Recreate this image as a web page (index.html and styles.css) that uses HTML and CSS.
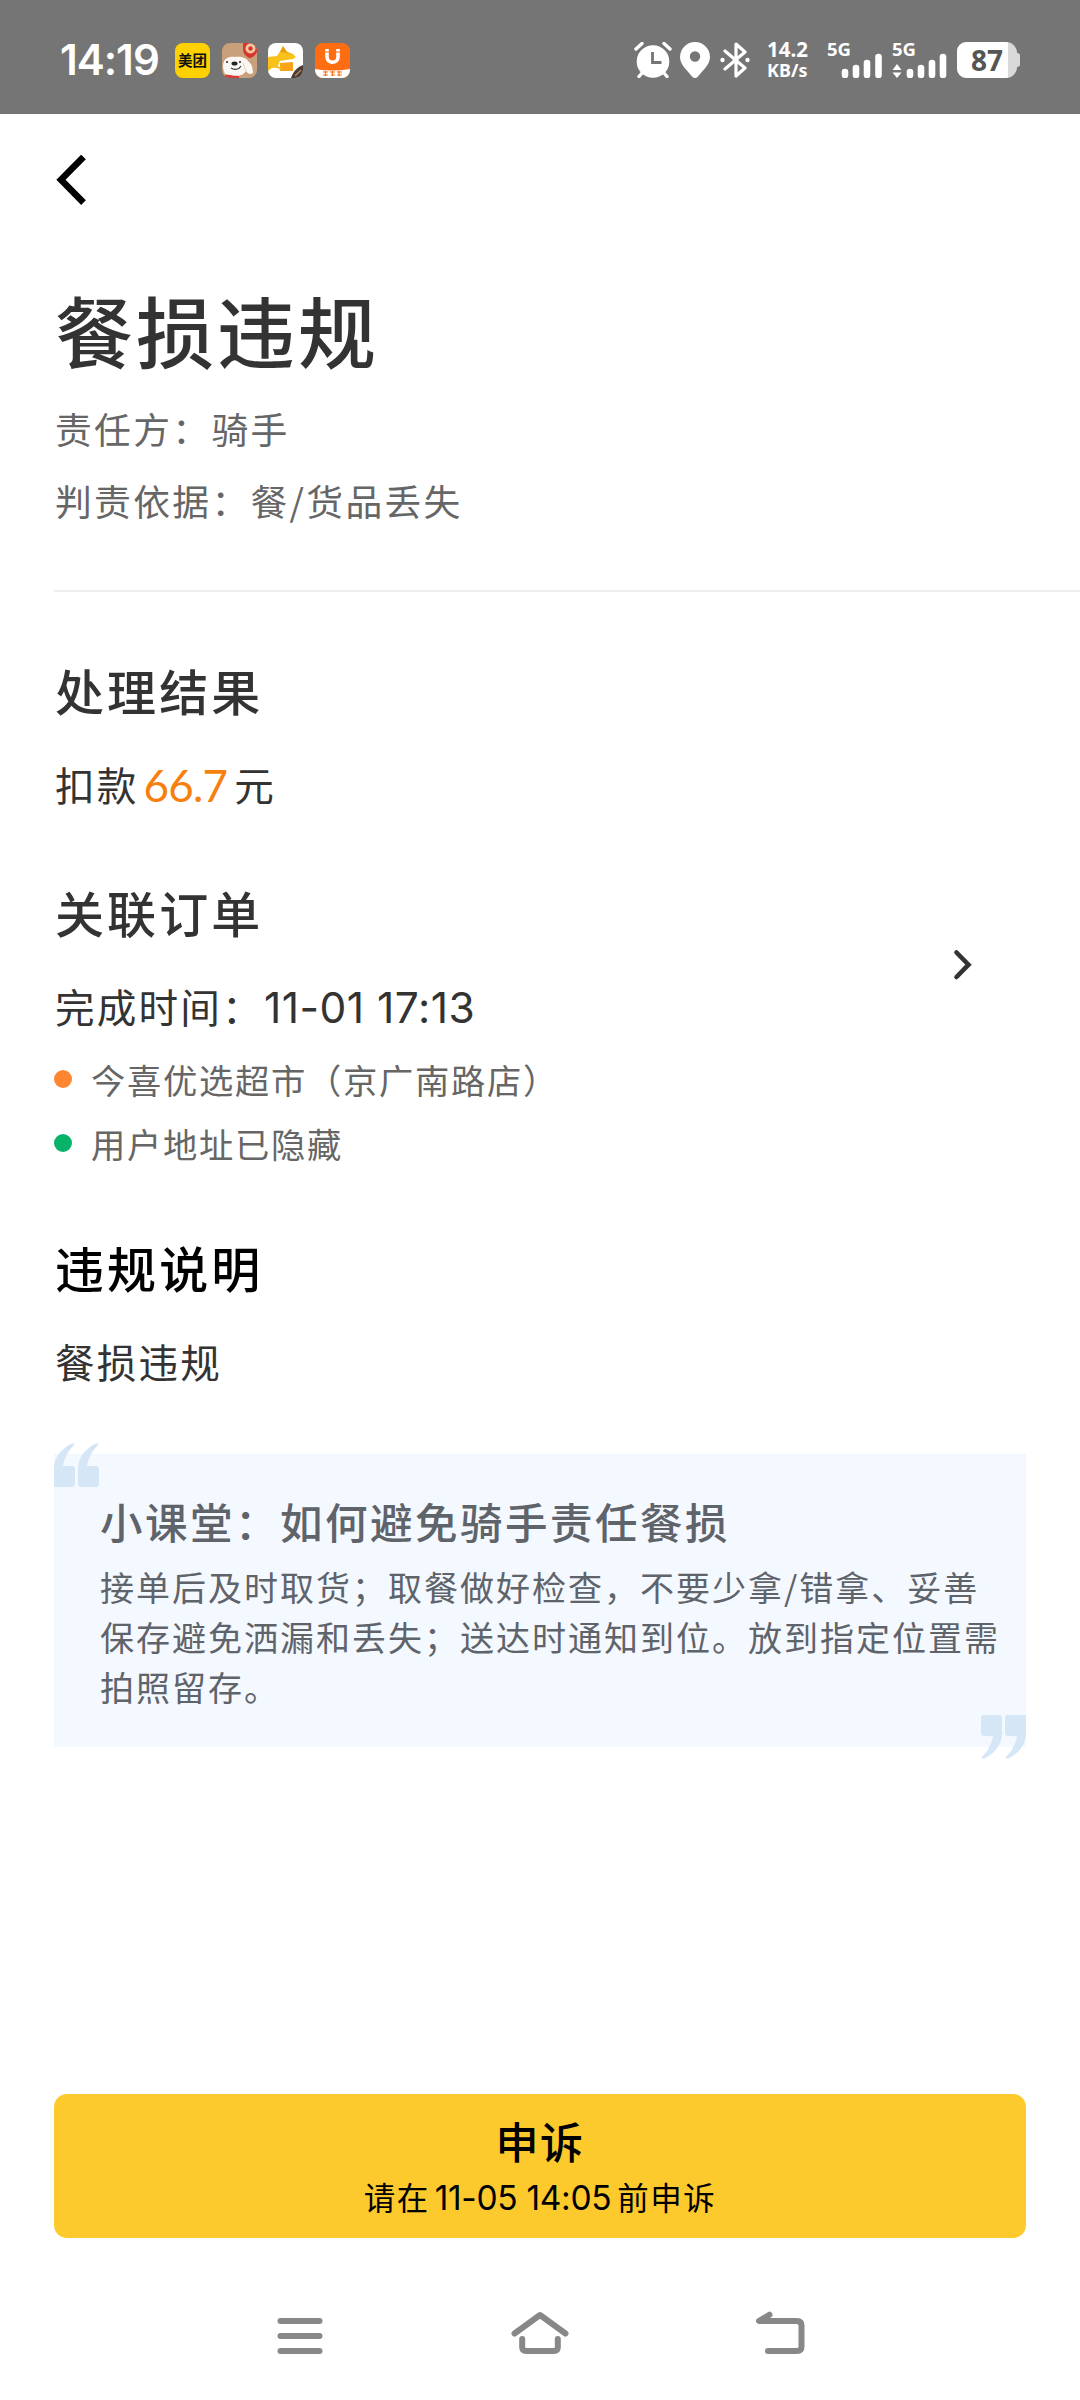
FILE: index.html
```html
<!DOCTYPE html>
<html lang="zh-CN">
<head>
<meta charset="utf-8">
<title>餐损违规</title>
<link rel="stylesheet" href="styles.css">
</head>
<body>
<div class="screen">
  <div class="status">
    <span class="clock">14:19</span>
    <div class="apps">
      <span class="app app-mt">美团</span>
      <svg class="app" viewBox="0 0 35 35">
        <rect width="35" height="35" fill="#c9a07c"/>
        <path d="M21 0h14v9q-3 6-8 6-6-3-6-9z" fill="#d8352f"/>
        <circle cx="28.500" cy="5.500" r="5" fill="#f0c9a0"/><circle cx="28.500" cy="5.500" r="2.200" fill="#d8352f"/>
        <path d="M3 31C-2 20 3 12 13 14c8-1 12 2 14 5 3 2 4 7 4 11-3 2-5 1-7-2-3 5-10 7-21 3z" fill="#fbf7f4"/>
        <path d="M21 20c1 3 2 6 3 8" fill="none" stroke="#d9cdc4"/>
        <ellipse cx="12.500" cy="20.500" rx="3" ry="2" fill="#222"/>
        <circle cx="5" cy="19" r="1" fill="#222"/><circle cx="18" cy="19" r="1" fill="#222"/>
        <path d="M9 25c3 2 8 2 10-2" fill="none" stroke="#333" stroke-width="1.100"/>
        <path d="M3 32c4-1 7 1 14 1v2H3z" fill="#d83a35"/>
      </svg>
      <svg class="app" viewBox="0 0 35 35">
        <rect width="35" height="35" fill="#fff"/>
        <path d="M0 14l9-1 4-6 2-4 4 6 6 2 3 3-3 2-7 1-6 1-3 7-4-1-5 4z" fill="#f8c21a"/>
        <path d="M12 9l3-6 4 6 6 2" fill="#e6a010"/>
        <path d="M12 20l13-1v9H12z" fill="#f9a31b"/>
        <path d="M0 26c4-3 9-3 13 0" stroke="#f8bd18" fill="none" stroke-width="2"/>
        <path d="M35 22v13H23c2-6 6-11 12-13z" fill="#4b3a30"/>
        <path d="M27 33l6-6" stroke="#a58b72" stroke-width="1.500"/>
      </svg>
      <svg class="app" viewBox="0 0 35 35">
        <rect width="35" height="35" fill="#ff6d12"/>
        <path d="M12 6v8c0 7 11 7 11 0V6" fill="none" stroke="#fff" stroke-width="3.600"/>
        <path d="M9 9h5M21 9h5" stroke="#ff6d12" stroke-width="1"/>
        <path d="M0 26q17 3 35 0v9H0z" fill="#fff"/>
        <path d="M8 29h5M8 32h5M10.500 28v5M15 29h5M16 32h4M17.500 28v5M22 29h5M22 32h5M24 28v5" stroke="#ff6d12" stroke-width="1.200"/>
      </svg>
    </div>
    <div class="tray">
      <svg class="alarm" viewBox="0 0 38 36" width="38" height="36">
        <circle cx="19" cy="19.500" r="16.300" fill="#fff"/>
        <path d="M2 7l6-5.500M36 7l-6-5.500" stroke="#fff" stroke-width="3.400" stroke-linecap="round"/>
        <path d="M8 31l-3 3.500M30 31l3 3.500" stroke="#fff" stroke-width="3.400" stroke-linecap="round"/>
        <path d="M18.500 10v10.500h9" fill="none" stroke="#757575" stroke-width="2.800"/>
      </svg>
      <svg class="pin" viewBox="0 0 30 36" width="30" height="36">
        <path fill-rule="evenodd" d="M15 0a15 15 0 0 1 15 15c0 8-8 14-12 19.500q-3 3-6 0C8 29 0 23 0 15A15 15 0 0 1 15 0zM15 9.300a5.200 5.200 0 1 0 0 10.400 5.200 5.200 0 0 0 0-10.400z" fill="#fff"/>
      </svg>
      <svg class="bt" viewBox="0 0 30 36" width="30" height="36">
        <path d="M5 9l20 17-9 8V2l9 8L5 27" fill="none" stroke="#fff" stroke-width="3.200" stroke-linejoin="round" stroke-linecap="round"/>
        <circle cx="2.500" cy="18" r="2.200" fill="#fff"/><circle cx="27.500" cy="18" r="2.200" fill="#fff"/>
      </svg>
      <div class="speed"><span>14.2</span><span class="unit">KB/s</span></div>
      <div class="signal sig1">
        <span class="gen">5G</span>
        <svg viewBox="0 0 55 36" width="55" height="36">
          <path d="M18 30v3M29 26v7M40 21v12M51.500 15v18" stroke="#fff" stroke-width="6.600" stroke-linecap="round"/>
        </svg>
      </div>
      <div class="signal sig2">
        <span class="gen">5G</span>
        <svg viewBox="0 0 55 36" width="55" height="36">
          <path d="M18 30v3M29 26v7M40 21v12M51 15v18" stroke="#fff" stroke-width="6.600" stroke-linecap="round"/>
          <path d="M0.500 28l4.500-6 4.500 6zM0.500 30.500h9L5 36z" fill="#fff"/>
        </svg>
      </div>
      <div class="battery"><span>87</span></div>
    </div>
  </div>

  <div class="topbar">
    <svg viewBox="0 0 32 50" width="32" height="50"><path d="M28.500 2L6 24.800l22.500 22.800" fill="none" stroke="#000" stroke-width="6.600"/></svg>
  </div>

  <main class="content">
    <h1>餐损违规</h1>
    <div class="meta">
      <p>责任方：骑手</p>
      <p>判责依据：餐/货品丢失</p>
    </div>
    <hr>

    <section class="block">
      <h2>处理结果</h2>
      <p class="line amount-line">扣款<span class="amount">66.7</span>元</p>
    </section>

    <section class="block order">
      <div>
        <h2>关联订单</h2>
        <p class="line">完成时间：<span class="num date">11-01 17:13</span></p>
        <ul class="stops">
          <li><i class="dot from"></i>今喜优选超市（京广南路店）</li>
          <li><i class="dot to"></i>用户地址已隐藏</li>
        </ul>
      </div>
      <svg class="go" viewBox="0 0 24 32" width="24" height="32"><path d="M4.500 3.500l12 12.200-12 12.300" fill="none" stroke="#333" stroke-width="4.600" stroke-linecap="round"/></svg>
    </section>

    <section class="block explain">
      <h2 class="black">违规说明</h2>
      <p class="line">餐损违规</p>
    </section>

    <aside class="tip">
      <svg class="quote open" viewBox="0 0 45 44" width="45" height="44"><path id="q" d="M19 0l1.500 1.500C15 7 10.500 14 9 23h9q3 0 3 3v15q0 3-3 3H0V26C0 15 7 5 19 0zM43 0l1.500 1.500C39 7 34.500 14 33 23h9q3 0 3 3v15q0 3-3 3H27q-3 0-3-3V26C24 15 31 5 43 0z" fill="#d5e6f7"/></svg>
      <h3>小课堂：如何避免骑手责任餐损</h3>
      <p>接单后及时取货；取餐做好检查，不要少拿/错拿、妥善<br>保存避免洒漏和丢失；送达时通知到位。放到指定位置需<br>拍照留存。</p>
      <svg class="quote close" viewBox="0 0 45 44" width="45" height="44"><use href="#q"/></svg>
    </aside>

    <button class="appeal">
      <span class="appeal-title">申诉</span>
      <span class="appeal-sub">请在<span class="num due">11-05 14:05</span>前申诉</span>
    </button>
  </main>

  <nav class="sysnav">
    <svg viewBox="0 0 60 50" width="60" height="50"><path d="M10.500 12h39M10.500 27h39M10.500 42h39"/></svg>
    <svg viewBox="0 0 60 50" width="60" height="50"><path d="M4.500 24.500L30 6l25.500 18.500" class="roof"/><path d="M12.200 30v8q0 4 4 4h27.600q4 0 4-4v-8"/></svg>
    <svg viewBox="0 0 60 50" width="60" height="50"><path d="M19.500 5.700L9 12h38q4.500 0 4.500 4.500v21q0 4.500-4.500 4.500H18"/></svg>
  </nav>
</div>
</body>
</html>
```

FILE: styles.css
```css
* { box-sizing: border-box; margin: 0; padding: 0; }

body {
  background: #fff;
  color: #333;
  font-family: "Noto Sans CJK SC", sans-serif;
}

.screen {
  width: 1080px;
  height: 2400px;
  display: flex;
  flex-direction: column;
  overflow: hidden;
}

/* System status bar */
.status {
  height: 114px;
  background: #757575;
  color: #fff;
  display: flex;
  align-items: center;
  padding: 6px 63px 0 60px;
}
.clock {
  width: 115px;
  font: 600 42px/50px Inter, sans-serif;
  letter-spacing: -1px;
}
.apps { display: flex; gap: 11.700px; }
.app { width: 35px; height: 35px; border-radius: 8px; overflow: hidden; display: block; }
.app-mt {
  background: #ffd100;
  color: #111;
  font-size: 14.500px;
  font-weight: 700;
  line-height: 34px;
  text-align: center;
  white-space: nowrap;
}
.tray { margin-left: auto; display: flex; align-items: center; height: 36px; }
.pin { margin-left: 8px; }
.bt { margin-left: 10px; }
.speed {
  margin-left: 17px;
  width: 46px;
  height: 41px;
  display: flex;
  flex-direction: column;
  font: 700 20.500px/19px "Noto Sans", sans-serif;
}
.speed .unit { font-size: 18px; line-height: 22px; }
.signal { position: relative; height: 36px; width: 55px; }
.sig1 { margin-left: 14px; }
.sig2 { margin-left: 10px; }
.signal svg { display: block; }
.gen {
  position: absolute;
  left: 0;
  top: -2px;
  font: 700 18.500px/18px "Noto Sans", sans-serif;
}
.battery {
  position: relative;
  margin-left: 10px;
  width: 60px;
  height: 36px;
  border-radius: 9px 11px 11px 9px;
  background: linear-gradient(90deg, #fff 51px, #d9d9d9 51px);
  color: #555;
  font: 700 28px/36px "Noto Sans", sans-serif;
  text-align: center;
}
.battery::after {
  content: "";
  position: absolute;
  left: 60px;
  top: 11px;
  width: 3px;
  height: 14px;
  border-radius: 0 3px 3px 0;
  background: #d9d9d9;
}

/* Page */
.topbar { height: 170px; padding: 41px 55px 0; }
.topbar svg { display: block; }

.content { padding: 0 54px; display: flex; flex-direction: column; }
h1 { padding-left: 1px; font-size: 78px; line-height: 90px; font-weight: 500; letter-spacing: 3px; }
.meta {
  margin-top: 18px;
  padding-left: 1px;
  font-size: 36.800px;
  line-height: 72px;
  letter-spacing: 2.300px;
  color: #666;
}
hr { margin: 54px -54px 0 0; border: 0; height: 2px; background: #eee; }

h2 { padding-left: 1px; font-size: 49px; line-height: 60px; font-weight: 500; letter-spacing: 3.100px; }
h2.black { color: #000; }
.block { margin-top: 68px; }
.line { margin-top: 39px; padding-left: 1px; font-size: 39.600px; line-height: 50px; letter-spacing: 2.200px; }
.amount-line { height: 50px; display: flex; align-items: center; }
.amount {
  margin: 1px 7px 0 5px;
  color: #f77f0e;
  font: 400 44px/50px Lato, sans-serif;
  letter-spacing: -0.800px;
}
.num { font-family: Inter, sans-serif; font-weight: 400; }
.date { font-size: 42.500px; letter-spacing: 0.500px; line-height: 50px; }

.order { margin-top: 73px; display: flex; justify-content: space-between; align-items: flex-start; }
.go { margin: 67px 50px 0 0; }
.stops { margin-top: 14px; list-style: none; color: #666; font-size: 34.300px; line-height: 64px; letter-spacing: 1.700px; }
.stops li { display: flex; align-items: center; height: 64px; }
.dot { width: 18px; height: 18px; border-radius: 50%; margin-right: 19px; }
.from { background: #ff8630; }
.to { background: #06b368; }
.explain { margin-top: 62px; }
.explain .line { margin-top: 39px; }

.tip {
  position: relative;
  margin-top: 68px;
  height: 293px;
  padding: 37px 0 0 46px;
  background: #f4f8ff;
  color: #5f636a;
}
.tip h3 { font-size: 42.500px; line-height: 60px; font-weight: 500; letter-spacing: 2.500px; }
.tip p { margin-top: 11px; font-size: 34px; line-height: 50px; letter-spacing: 2px; white-space: nowrap; }
.quote { position: absolute; }
.open { left: 0; top: -11px; }
.close { right: 0; bottom: -12px; transform: rotate(180deg); }

.appeal {
  margin-top: 347px;
  height: 144px;
  padding-top: 21px;
  border: 0;
  border-radius: 13px;
  background: #fdca2e;
  color: #000;
  font-family: inherit;
  display: flex;
  flex-direction: column;
  align-items: center;
}
.appeal-title { font-size: 43px; line-height: 50px; font-weight: 500; letter-spacing: 1.500px; }
.appeal-sub {
  margin-top: 11px;
  height: 40px;
  display: flex;
  align-items: center;
  font-size: 31.500px;
  line-height: 40px;
  letter-spacing: 1.500px;
}
.due { font-size: 33.500px; letter-spacing: -0.300px; margin: 4px 6px 0 5px; }

/* System navigation */
.sysnav { flex: 1; padding: 71px 270px 0; display: flex; justify-content: space-between; }
.sysnav svg { fill: none; stroke: #888; stroke-width: 6; stroke-linecap: round; stroke-linejoin: round; }
```
